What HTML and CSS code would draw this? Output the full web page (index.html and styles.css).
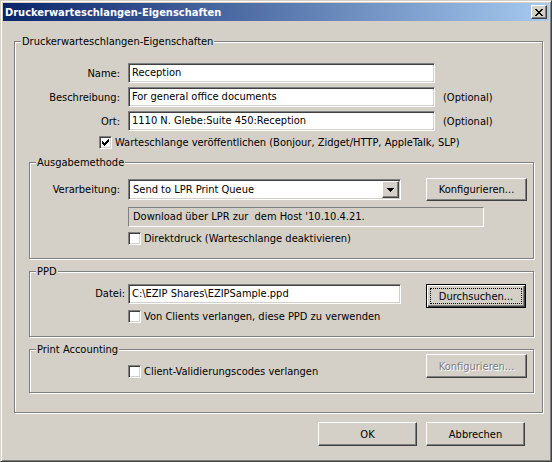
FILE: index.html
```html
<!DOCTYPE html>
<html lang="de">
<head>
<meta charset="utf-8">
<title>Druckerwarteschlangen-Eigenschaften</title>
<link rel="stylesheet" href="styles.css">
</head>
<body>
<div class="window">
  <div class="titlebar">
    <span class="title">Druckerwarteschlangen-Eigenschaften</span>
    <span class="close raised">
      <svg width="8" height="7" viewBox="0 0 8 7" shape-rendering="crispEdges"><path fill="#000" d="M0 0h2v1H0zM6 0h2v1H6zM1 1h2v1H1zM5 1h2v1H5zM2 2h4v1H2zM3 3h2v1H3zM2 4h4v1H2zM1 5h2v1H1zM5 5h2v1H5zM0 6h2v1H0zM6 6h2v1H6z"/></svg>
    </span>
  </div>

  <div class="group outer">
    <span class="legend">Druckerwarteschlangen-Eigenschaften</span>
    <div class="form">
      <span class="lbl">Name:</span><div class="edit">Reception</div><span></span>
      <span class="lbl">Beschreibung:</span><div class="edit">For general office documents</div><span class="opt">(Optional)</span>
      <span class="lbl">Ort:</span><div class="edit">1110 N. Glebe:Suite 450:Reception</div><span class="opt">(Optional)</span>
    </div>
    <div class="check-row publish">
      <span class="cb"><svg width="7" height="7" viewBox="0 0 7 7" shape-rendering="crispEdges"><path fill="#000" d="M0 2h1v3H0zM1 3h1v3H1zM2 4h1v3H2zM3 3h1v3H3zM4 2h1v3H4zM5 1h1v3H5zM6 0h1v3H6z"/></svg></span>
      <span>Warteschlange veröffentlichen (Bonjour, Zidget/HTTP, AppleTalk, SLP)</span>
    </div>

    <div class="group inner ausgabe">
      <span class="legend">Ausgabemethode</span>
      <div class="row center">
        <span class="lbl2">Verarbeitung:</span>
        <div class="combo">
          <span class="combo-text">Send to LPR Print Queue</span>
          <span class="combo-btn raised"><svg width="7" height="4" viewBox="0 0 7 4" shape-rendering="crispEdges"><path fill="#000" d="M0 0h7v1H0zM1 1h5v1H1zM2 2h3v1H2zM3 3h1v1H3z"/></svg></span>
        </div>
        <span class="btn raised konf">Konfigurieren...</span>
      </div>
      <div class="static">Download über LPR zur&nbsp; dem Host '10.10.4.21.</div>
      <div class="check-row indent direkt">
        <span class="cb"></span>
        <span>Direktdruck (Warteschlange deaktivieren)</span>
      </div>
    </div>

    <div class="group inner ppd">
      <span class="legend">PPD</span>
      <div class="row top">
        <span class="lbl3">Datei:</span>
        <div class="edit file">C:\EZIP Shares\EZIPSample.ppd</div>
        <span class="btn default durch">Durchsuchen...</span>
      </div>
      <div class="check-row indent clients">
        <span class="cb"></span>
        <span>Von Clients verlangen, diese PPD zu verwenden</span>
      </div>
    </div>

    <div class="group inner accounting">
      <span class="legend">Print Accounting</span>
      <div class="row bottom">
        <div class="check-row indent acc">
          <span class="cb"></span>
          <span>Client-Validierungscodes verlangen</span>
        </div>
        <span class="btn raised disabled">Konfigurieren...</span>
      </div>
    </div>
  </div>

  <div class="buttons">
    <span class="btn raised ok">OK</span>
    <span class="btn raised cancel">Abbrechen</span>
  </div>
</div>
</body>
</html>
```

FILE: styles.css
```css
* { box-sizing: border-box; }
html, body { margin: 0; padding: 0; }
body {
  width: 552px;
  height: 462px;
  background: #d4d0c8;
  font-family: "DejaVu Sans Condensed", "DejaVu Sans", sans-serif;
  font-stretch: condensed;
  font-size: 11px;
  color: #000;
}

.window {
  width: 552px;
  height: 462px;
  background: #d4d0c8;
  border: 1px solid;
  border-color: #d4d0c8 #404040 #404040 #d4d0c8;
  box-shadow: inset 1px 1px 0 #fff, inset -1px -1px 0 #808080;
  padding: 2px;
}

.titlebar {
  height: 18px;
  display: flex;
  align-items: center;
  padding: 0 2px;
  background: linear-gradient(to right, #0a246a, #a6caf0);
}
.title {
  color: #fff;
  font-weight: bold;
  white-space: nowrap;
}
.raised {
  background: #d4d0c8;
  border: 1px solid;
  border-color: #fff #404040 #404040 #fff;
  box-shadow: inset -1px -1px 0 #808080;
}
.close {
  margin-left: auto;
  width: 16px;
  height: 14px;
  display: flex;
  align-items: center;
  justify-content: center;
  padding-right: 1px;
}
.close svg { display: block; }

.group {
  position: relative;
  border: 1px solid #808080;
  box-shadow: inset 1px 1px 0 #fff, 1px 1px 0 #fff;
}
.legend {
  position: absolute;
  top: -7px;
  left: 6px;
  padding: 0 1px;
  line-height: 13px;
  background: #d4d0c8;
  white-space: nowrap;
}
.outer {
  margin: 20px 0 0 11px;
  width: 529px;
  height: 372px;
  padding-top: 21px;
}

.form {
  display: grid;
  grid-template-columns: 105px 307px auto;
  column-gap: 8px;
  row-gap: 4px;
  align-items: center;
}
.lbl { text-align: right; white-space: nowrap; }
.opt { white-space: nowrap; }

.edit {
  height: 20px;
  background: #fff;
  border: 1px solid;
  border-color: #808080 #fff #fff #808080;
  box-shadow: inset 1px 1px 0 #404040, inset -1px -1px 0 #d4d0c8;
  padding: 0 3px;
  line-height: 18px;
  white-space: nowrap;
  overflow: hidden;
}

.check-row {
  display: flex;
  align-items: center;
  gap: 3px;
  height: 13px;
  white-space: nowrap;
}
.cb {
  flex: none;
  width: 13px;
  height: 13px;
  background: #fff;
  border: 1px solid;
  border-color: #808080 #fff #fff #808080;
  box-shadow: inset 1px 1px 0 #404040, inset -1px -1px 0 #d4d0c8;
  display: flex;
  align-items: center;
  justify-content: center;
}
.cb svg { display: block; }
.publish { margin: 5px 0 0 84px; }

.inner {
  margin-left: 14px;
  width: 505px;
}
.ausgabe {
  margin-top: 13px;
  height: 97px;
  padding-top: 15px;
}
.ppd {
  margin-top: 12px;
  height: 66px;
  padding-top: 12px;
}
.accounting {
  margin-top: 12px;
  height: 44px;
  padding-top: 4px;
}

.row { display: flex; }
.row.center { align-items: center; }
.row.top { align-items: flex-start; }
.row.bottom { align-items: flex-end; }

.lbl2 {
  width: 90px;
  margin-right: 8px;
  text-align: right;
  white-space: nowrap;
}
.lbl3 {
  width: 95px;
  margin-right: 3px;
  text-align: right;
  line-height: 20px;
}

.combo {
  width: 273px;
  height: 21px;
  background: #fff;
  border: 1px solid;
  border-color: #808080 #fff #fff #808080;
  box-shadow: inset 1px 1px 0 #404040, inset -1px -1px 0 #d4d0c8;
  padding: 1px 1px 1px 4px;
  display: flex;
  align-items: center;
}
.combo-text { flex: 1; white-space: nowrap; }
.combo-btn {
  width: 17px;
  height: 17px;
  display: flex;
  align-items: center;
  justify-content: center;
}
.combo-btn svg { display: block; }

.btn {
  display: flex;
  align-items: center;
  justify-content: center;
  white-space: nowrap;
  position: relative;
}
.konf {
  margin-left: 25px;
  width: 101px;
  height: 23px;
}

.static {
  margin: 6px 0 0 98px;
  width: 356px;
  height: 20px;
  border: 1px solid;
  border-color: #808080 #fff #fff #808080;
  padding: 0 4px;
  line-height: 18px;
  white-space: nowrap;
}
.indent { margin-left: 98px; }
.direkt { margin-top: 5px; }

.file { width: 273px; }
.durch {
  margin-left: 25px;
  width: 100px;
  height: 24px;
}
.default {
  background: #d4d0c8;
  border: 1px solid #000;
  box-shadow: inset 1px 1px 0 #fff, inset -1px -1px 0 #404040, inset -2px -2px 0 #808080;
}
.default::after {
  content: "";
  position: absolute;
  inset: 3px;
  border: 1px dotted #000;
}
.clients { margin-top: 2px; }

.acc { width: 298px; }
.disabled {
  width: 101px;
  height: 24px;
  color: #808080;
  text-shadow: 1px 1px 0 #fff;
}

.buttons {
  display: flex;
  justify-content: flex-end;
  gap: 9px;
  margin-top: 9px;
  padding-right: 24px;
}
.ok, .cancel {
  width: 99px;
  height: 24px;
}
```
